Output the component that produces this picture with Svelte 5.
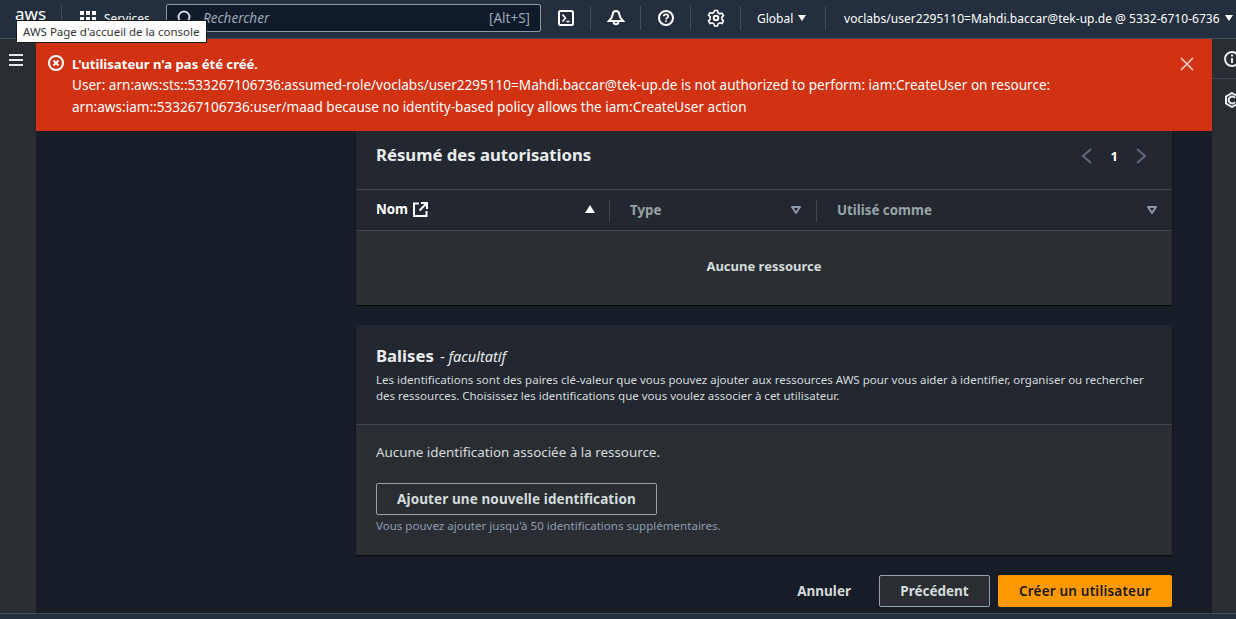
<script lang="ts">
  const columns = [
    { label: 'Nom', sorted: true, width: 253 },
    { label: 'Type', sorted: false, width: 207 },
    { label: 'Utilisé comme', sorted: false, width: 356 }
  ];
</script>

<div class="page">
  <header class="topbar">
    <div class="logo">aws</div>
    <div class="services">
      <svg width="16" height="16" viewBox="0 0 16 16" fill="#fff">
        <rect x="0" y="1" width="4" height="4" /><rect x="6" y="1" width="4" height="4" /><rect x="12" y="1" width="4" height="4" />
        <rect x="0" y="7" width="4" height="4" /><rect x="6" y="7" width="4" height="4" /><rect x="12" y="7" width="4" height="4" />
        <rect x="0" y="13" width="4" height="3" /><rect x="6" y="13" width="4" height="3" /><rect x="12" y="13" width="4" height="3" />
      </svg>
      <span>Services</span>
    </div>
    <div class="search">
      <svg width="16" height="16" viewBox="0 0 16 16" fill="none" stroke="#d1d5db" stroke-width="2">
        <circle cx="7" cy="7" r="5.5" /><path d="M11 11l4 4" />
      </svg>
      <em>Rechercher</em>
      <span>[Alt+S]</span>
    </div>
    <div class="tool">
      <svg width="16" height="16" viewBox="0 0 16 16" fill="none" stroke="#fff" stroke-width="2">
        <rect x="1" y="1" width="14" height="14" rx="1.5" /><path d="M4.5 4.5L7.5 8l-3 3.5M8.5 11.5h3" stroke-width="1.6" />
      </svg>
    </div>
    <div class="tool">
      <svg width="18" height="18" viewBox="0 0 18 18" fill="none" stroke="#fff" stroke-width="2">
        <path d="M9 2c-2.200 0-3.200 1.700-3.400 3.600-.2 2.400-1.200 4-3.600 6.400h14c-2.400-2.400-3.400-4-3.600-6.400C12.200 3.700 11.200 2 9 2z" />
        <path d="M6.500 12.500c0 3.500 5 3.500 5 0" />
      </svg>
    </div>
    <div class="tool">
      <svg width="16" height="16" viewBox="0 0 16 16" fill="none" stroke="#fff" stroke-width="2">
        <circle cx="8" cy="8" r="7" /><path d="M5.800 6.300c0-1.300 1-2 2.200-2s2.200.8 2.200 1.900c0 1.700-2.200 1.700-2.200 3.300" stroke-width="1.700" /><path d="M8 10.500v1.600" stroke-width="1.700" />
      </svg>
    </div>
    <div class="tool">
      <svg width="18" height="18" viewBox="0 0 18 18" fill="none" stroke="#fff" stroke-width="2">
        <path d="M7.500 1.500h3l.5 2.200 1.900 1.100 2.100-.7 1.500 2.600-1.600 1.500v2.200l1.600 1.500-1.500 2.600-2.100-.7-1.900 1.100-.5 2.100h-3l-.5-2.100-1.900-1.100-2.100.7-1.500-2.600 1.600-1.500V7.700L1.500 6.200 3 3.600l2.100.7L7 3.200z" stroke-width="1.600" />
        <circle cx="9" cy="9" r="2.300" />
      </svg>
    </div>
    <div class="region">Global <i class="caret"></i></div>
    <div class="account">voclabs/user2295110=Mahdi.baccar@tek-up.de @ 5332-6710-6736 <i class="caret"></i></div>
  </header>

  <div class="tooltip">AWS Page d'accueil de la console</div>

  <div class="body">
    <aside class="nav">
      <svg width="14" height="12" viewBox="0 0 14 12" fill="none" stroke="#e9ebed" stroke-width="2">
        <path d="M0 1h14M0 6h14M0 11h14" />
      </svg>
    </aside>

    <main>
      <div class="flash">
        <svg class="flash-icon" width="16" height="16" viewBox="0 0 16 16" fill="none" stroke="#fff" stroke-width="2">
          <circle cx="8" cy="8" r="7" /><path d="M5.500 5.500l5 5M10.500 5.500l-5 5" />
        </svg>
        <div class="flash-text">
          <strong>L'utilisateur n'a pas été créé.</strong>
          <p>User: arn:aws:sts::533267106736:assumed-role/voclabs/user2295110=Mahdi.baccar@tek-up.de is not authorized to perform: iam:CreateUser on resource: arn:aws:iam::533267106736:user/maad because no identity-based policy allows the iam:CreateUser action</p>
        </div>
        <svg class="flash-close" width="14" height="14" viewBox="0 0 14 14" fill="none" stroke="#f4d5cd" stroke-width="1.600">
          <path d="M1 1l12 12M13 1L1 13" />
        </svg>
      </div>

      <div class="content">
        <section class="panel">
          <div class="panel-head summary">
            <h2>Résumé des autorisations</h2>
            <div class="pager">
              <svg width="12" height="16" viewBox="0 0 12 16" fill="none" stroke="#5f6b7a" stroke-width="2"><path d="M10 1L2 8l8 7" /></svg>
              <b>1</b>
              <svg width="12" height="16" viewBox="0 0 12 16" fill="none" stroke="#5f6b7a" stroke-width="2"><path d="M2 1l8 7-8 7" /></svg>
            </div>
          </div>
          <div class="thead">
            {#each columns as col, i}
              <div class="th" class:active={col.sorted} class:divided={i > 0} style="width: {col.width}px">
                <span class="th-label">
                  {col.label}
                  {#if col.sorted}
                    <svg width="15" height="15" viewBox="0 0 15 15" fill="none" stroke="#fff" stroke-width="2">
                      <path d="M6 1.500H1v12.500h12.500V9M8 1h6v6M14 1L6.500 8.500" />
                    </svg>
                  {/if}
                </span>
                {#if col.sorted}
                  <i class="sort-up"></i>
                {:else}
                  <svg width="10" height="8" viewBox="0 0 10 8" fill="none" stroke="#8d99a8" stroke-width="2" stroke-linejoin="round"><path d="M1 1h8L5 7z" /></svg>
                {/if}
              </div>
            {/each}
          </div>
          <div class="empty">Aucune ressource</div>
        </section>

        <section class="panel">
          <div class="panel-head tags">
            <h2>Balises <small>- facultatif</small></h2>
            <p>Les identifications sont des paires clé-valeur que vous pouvez ajouter aux ressources AWS pour vous aider à identifier, organiser ou rechercher des ressources. Choisissez les identifications que vous voulez associer à cet utilisateur.</p>
          </div>
          <div class="tags-body">
            <div class="no-tags">Aucune identification associée à la ressource.</div>
            <button class="btn add">Ajouter une nouvelle identification</button>
            <div class="hint">Vous pouvez ajouter jusqu'à 50 identifications supplémentaires.</div>
          </div>
        </section>

        <div class="actions">
          <span class="cancel">Annuler</span>
          <button class="btn prev">Précédent</button>
          <button class="btn primary">Créer un utilisateur</button>
        </div>
      </div>
    </main>

    <aside class="rail">
      <svg width="16" height="16" viewBox="0 0 16 16" fill="none" stroke="#e9ebed" stroke-width="2">
        <circle cx="8" cy="8" r="7" /><path d="M8 7v5M8 3.500v2" />
      </svg>
      <hr />
      <svg width="16" height="16" viewBox="0 0 16 16" fill="none" stroke="#e9ebed" stroke-width="2">
        <path d="M8 1l6 3.500v7L8 15l-6-3.500v-7zM11 6a3.500 3.500 0 1 0 0 4" />
      </svg>
    </aside>
  </div>

  <footer class="footer"></footer>
</div>

<style>
  :global(body) {
    margin: 0;
    background: #161d26;
  }
  .page {
    position: relative;
    display: flex;
    flex-direction: column;
    width: 1236px;
    height: 619px;
    overflow: hidden;
    color: #d1d5db;
    font-family: 'Noto Sans', 'Open Sans', sans-serif;
    font-size: 14px;
  }
  .topbar {
    display: flex;
    flex: none;
    align-items: center;
    height: 39px;
    padding-bottom: 2px;
    box-sizing: border-box;
    border-bottom: 1px solid #414d5c;
    background: #232f3e;
    color: #fff;
  }
  .logo {
    width: 62px;
    height: 26px;
    padding-left: 15px;
    box-sizing: border-box;
    border-right: 1px solid #414d5c;
    font-size: 17px;
    line-height: 18px;
  }
  .services {
    display: flex;
    align-items: center;
    gap: 8px;
    width: 86px;
    margin-left: 18px;
    font-size: 12px;
  }
  .services svg {
    flex: none;
  }
  .search {
    display: flex;
    align-items: center;
    width: 375px;
    height: 28px;
    padding: 0 10px;
    box-sizing: border-box;
    border: 1px solid #8d99a8;
    border-radius: 2px;
    background: #0f1b2a;
    color: #9ba7b6;
    font-size: 13.500px;
  }
  .search em {
    flex: 1;
    margin-left: 10px;
  }
  .tool {
    display: flex;
    align-items: center;
    justify-content: center;
    width: 50px;
    height: 24px;
    box-sizing: border-box;
    border-right: 1px solid #414d5c;
  }
  .region {
    display: flex;
    align-items: center;
    gap: 5px;
    width: 85px;
    height: 24px;
    padding-left: 16px;
    box-sizing: border-box;
    border-right: 1px solid #414d5c;
    font-size: 12px;
  }
  .account {
    display: flex;
    align-items: center;
    gap: 5px;
    margin-left: 18px;
    font-size: 12px;
    letter-spacing: 0.03px;
    white-space: nowrap;
  }
  .caret {
    width: 0;
    height: 0;
    border-top: 6px solid #fff;
    border-right: 4.5px solid transparent;
    border-left: 4.5px solid transparent;
  }
  .tooltip {
    position: absolute;
    top: 20px;
    left: 16px;
    padding: 0 6px;
    border: 1px solid #1a1a1a;
    background: #fff;
    color: #333;
    font-size: 11.500px;
    line-height: 21px;
    white-space: nowrap;
  }
  .body {
    display: flex;
    flex: 1;
    min-height: 0;
  }
  .nav {
    flex: none;
    width: 36px;
    padding: 15px 0 0 9px;
    box-sizing: border-box;
    background: #2a2e33;
  }
  .nav svg {
    display: block;
  }
  main {
    flex: 1;
    min-width: 0;
  }
  .flash {
    display: flex;
    align-items: flex-start;
    height: 92px;
    padding: 15px 18px 0 12px;
    box-sizing: border-box;
    background: #d13212;
    color: #fff;
  }
  .flash-icon {
    flex: none;
    margin-top: 1px;
  }
  .flash-close {
    flex: none;
    margin-top: 3px;
    margin-left: 20px;
  }
  .flash-text {
    flex: 1;
    margin-left: 8px;
  }
  .flash-text strong {
    display: block;
    font-size: 13.100px;
    line-height: 20px;
  }
  .flash-text p {
    width: 1010px;
    margin: 0;
    font-size: 13.570px;
    line-height: 22px;
  }
  .content {
    padding: 0 40px 0 320px;
  }
  .panel {
    box-shadow: 0 1px 1px #000a;
    background: #2a2e33;
  }
  .panel + .panel {
    margin-top: 20px;
  }
  .panel-head {
    background: #232730;
  }
  .summary {
    display: flex;
    align-items: center;
    justify-content: space-between;
    height: 46px;
    padding: 0 25px 12px 20px;
    border-bottom: 1px solid #414750;
  }
  h2 {
    margin: 0;
    color: #eaeded;
    font-size: 16.700px;
    font-weight: 700;
  }
  h2 small {
    margin-left: 2px;
    font-size: 14.500px;
    font-style: italic;
    font-weight: 400;
  }
  .pager {
    display: flex;
    align-items: center;
    gap: 18px;
    margin-top: 4px;
    color: #fff;
    font-size: 13px;
  }
  .pager b {
    margin-right: -1px;
  }
  .thead {
    display: flex;
    height: 41px;
    box-sizing: border-box;
    padding-bottom: 2px;
    border-bottom: 1px solid #414750;
    background: #232730;
  }
  .th {
    display: flex;
    align-items: center;
    justify-content: space-between;
    padding: 0 15px 0 20px;
    box-sizing: border-box;
    color: #95a5a6;
    font-size: 13.300px;
    font-weight: 700;
  }
  .th.active {
    padding-right: 14px;
    color: #fff;
  }
  .th.divided {
    position: relative;
    padding-top: 2px;
    padding-left: 21px;
  }
  .th.divided::before {
    position: absolute;
    top: 10px;
    left: 0;
    width: 1px;
    height: 22px;
    background: #414750;
    content: '';
  }
  .th-label {
    display: flex;
    align-items: center;
    gap: 5px;
  }
  .sort-up {
    width: 0;
    height: 0;
    border-right: 5.500px solid transparent;
    border-bottom: 8px solid #fff;
    border-left: 5.500px solid transparent;
  }
  .empty {
    height: 74px;
    color: #d5dbdb;
    font-size: 13px;
    font-weight: 700;
    line-height: 70px;
    text-align: center;
  }
  .tags {
    height: 100px;
    padding: 19px 20px 0;
    box-sizing: border-box;
    border-bottom: 1px solid #414750;
  }
  .tags p {
    margin: 5px 0 0;
    color: #d5dbdb;
    font-size: 11.500px;
    line-height: 16px;
  }
  .tags-body {
    height: 130px;
    padding: 18px 20px 0;
    box-sizing: border-box;
  }
  .no-tags {
    color: #d5dbdb;
    font-size: 13.400px;
    line-height: 19px;
  }
  .btn {
    border-radius: 2px;
    font-family: inherit;
    font-weight: 700;
    font-size: 13.500px;
    cursor: pointer;
  }
  .add {
    display: block;
    width: 281px;
    height: 32px;
    margin-top: 21px;
    padding: 0;
    border: 1px solid #95a5a6;
    background: transparent;
    color: #d5dbdb;
    letter-spacing: 0.1px;
  }
  .hint {
    margin-top: 2px;
    color: #8b9bab;
    font-size: 11.550px;
    line-height: 17px;
  }
  .actions {
    display: flex;
    align-items: center;
    justify-content: flex-end;
    gap: 8px;
    margin-top: 20px;
  }
  .cancel {
    margin-right: 20px;
    color: #d5dbdb;
    font-size: 13.500px;
    font-weight: 700;
  }
  .prev {
    width: 111px;
    height: 32px;
    border: 1px solid #95a5a6;
    background: #2a2e33;
    color: #d5dbdb;
  }
  .primary {
    width: 174px;
    height: 32px;
    border: 0;
    background: #ff9900;
    color: #16191f;
    font-weight: 600;
    letter-spacing: 0.2px;
  }
  .rail {
    flex: none;
    width: 24px;
    padding-top: 12px;
    box-sizing: border-box;
    background: #2a2e33;
    overflow: hidden;
  }
  .rail svg {
    display: block;
    margin-left: 12px;
  }
  .rail hr {
    margin: 11px 0 13px;
    border: 0;
    border-top: 1px solid #414750;
  }
  .footer {
    flex: none;
    height: 5px;
    border-top: 1px solid #414d5c;
    background: #232f3e;
  }
</style>
